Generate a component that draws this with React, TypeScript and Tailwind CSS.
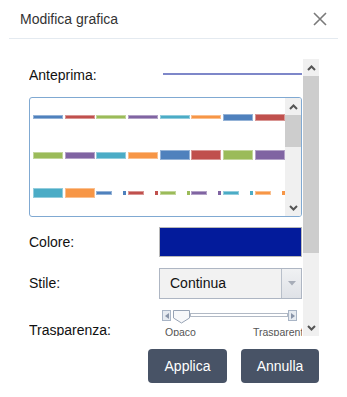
import React from "react";

type Seg = { c: string; h: string; dash?: boolean };

const BLUE = "bg-[#4f81bd]";
const RED = "bg-[#c0504d]";
const GREEN = "bg-[#9bbb59]";
const PURPLE = "bg-[#8064a2]";
const TEAL = "bg-[#4bacc6]";
const ORANGE = "bg-[#f79646]";

const rows: Seg[][] = [
  [
    { c: BLUE, h: "h-[4px]" },
    { c: RED, h: "h-[4px]" },
    { c: GREEN, h: "h-[4px]" },
    { c: PURPLE, h: "h-[4px]" },
    { c: TEAL, h: "h-[4px]" },
    { c: ORANGE, h: "h-[4px]" },
    { c: BLUE, h: "h-[7px]" },
    { c: RED, h: "h-[7px]" },
  ],
  [
    { c: GREEN, h: "h-[7px]" },
    { c: PURPLE, h: "h-[7px]" },
    { c: TEAL, h: "h-[7px]" },
    { c: ORANGE, h: "h-[7px]" },
    { c: BLUE, h: "h-[10px]" },
    { c: RED, h: "h-[10px]" },
    { c: GREEN, h: "h-[10px]" },
    { c: PURPLE, h: "h-[10px]" },
  ],
  [
    { c: TEAL, h: "h-[10px]" },
    { c: ORANGE, h: "h-[10px]" },
    { c: BLUE, h: "h-[4px]", dash: true },
    { c: RED, h: "h-[4px]", dash: true },
    { c: GREEN, h: "h-[4px]", dash: true },
    { c: PURPLE, h: "h-[4px]", dash: true },
    { c: TEAL, h: "h-[4px]", dash: true },
    { c: ORANGE, h: "h-[4px]", dash: true },
  ],
];

function Chevron({ up }: { up?: boolean }) {
  return (
    <svg width="9" height="6" viewBox="0 0 9 6">
      <path
        d={up ? "M1 5 L4.5 1.5 L8 5" : "M1 1 L4.5 4.5 L8 1"}
        fill="none"
        stroke="#555"
        strokeWidth="2"
      />
    </svg>
  );
}

function Segment({ s }: { s: Seg }) {
  if (s.dash) {
    return (
      <div className="flex w-[30px] shrink-0 justify-between">
        <div className={`${s.c} ${s.h} w-[16px] ring-1 ring-inset ring-white/40`} />
        <div className={`${s.c} ${s.h} w-[3px]`} />
      </div>
    );
  }
  return <div className={`${s.c} ${s.h} w-[30px] shrink-0 ring-1 ring-inset ring-white/40`} />;
}

export default function App() {
  return (
    <div className="relative h-[397px] w-[347px] overflow-hidden bg-white font-['Liberation_Sans',Arial,sans-serif] text-[14px] text-[#111]">
      {/* header */}
      <div className="flex h-[38px] items-center justify-between pl-[20px] pr-[20px]">
        <span className="text-[14px] text-[#333]">Modifica grafica</span>
        <svg width="14" height="14" viewBox="0 0 14 14" className="mt-[-1px]">
          <path d="M1 1 L13 13 M13 1 L1 13" stroke="#7a7a7a" strokeWidth="1.6" />
        </svg>
      </div>
      <div className="mx-[9px] h-px bg-[#e4eaf0]" />

      {/* body */}
      <div className="ml-[29px] mt-[20px] flex">
        <div className="h-[277px] w-[273px] overflow-hidden">
          <div className="flex h-[32px] items-center">
            <span className="w-[134px] shrink-0">Anteprima:</span>
            <div className="mt-[-2px] h-[2px] flex-1 bg-[#7e87c9]" />
          </div>

          <div className="mt-[6px] flex h-[120px] overflow-hidden rounded-[3px] border border-[#80a9d2]">
            <div className="flex-1 overflow-hidden pl-[3px]">
              {rows.map((r, i) => (
                <div key={i} className="flex h-[38px] items-center gap-[1.7px]">
                  {r.map((s, j) => (
                    <Segment key={j} s={s} />
                  ))}
                </div>
              ))}
            </div>
            <div className="flex w-[16px] shrink-0 flex-col bg-[#f0f0f0]">
              <div className="flex h-[17px] items-center justify-center">
                <Chevron up />
              </div>
              <div className="h-[32px] bg-[#cdcdcd]" />
              <div className="flex-1" />
              <div className="flex h-[17px] items-center justify-center">
                <Chevron />
              </div>
            </div>
          </div>

          <div className="mt-[10px] flex items-center">
            <span className="w-[130px] shrink-0">Colore:</span>
            <div className="h-[30px] flex-1 border border-[#b8b8b8] bg-[#031b9b]" />
          </div>

          <div className="mt-[11px] flex items-center">
            <span className="w-[130px] shrink-0">Stile:</span>
            <div className="flex h-[31px] flex-1 border border-[#aeb6c3] bg-[#f2f2f2]">
              <span className="flex flex-1 items-center pl-[10px]">Continua</span>
              <div className="flex w-[20px] items-center justify-center border-l border-[#b8bfca] bg-gradient-to-b from-[#f0f1f3] to-[#dfe2e7]">
                <svg width="8" height="5" viewBox="0 0 8 5">
                  <path d="M0 0 L8 0 L4 4.5 Z" fill="#a7adb8" />
                </svg>
              </div>
            </div>
          </div>

          <div className="mt-[11px] flex">
            <span className="w-[130px] shrink-0 self-end leading-[16px]">Trasparenza:</span>
            <div className="flex-1 overflow-hidden">
              <div className="flex h-[14px] items-start pl-[3px]">
                <div className="flex h-[11px] w-[9px] items-center justify-center border border-[#a9b5c6] bg-[#e6ebf1]">
                  <svg width="4" height="6" viewBox="0 0 4 6">
                    <path d="M4 0 L0 3 L4 6 Z" fill="#8894a8" />
                  </svg>
                </div>
                <svg width="17" height="14" viewBox="0 0 17 14" className="ml-[2px] shrink-0">
                  <path d="M0.5 0.5 H16.5 V8 L8.5 13 L0.5 8 Z" fill="#f7f8fa" stroke="#97a3b5" strokeWidth="1" />
                </svg>
                <div className="mt-[3px] h-[4px] flex-1 border border-[#b1b9c5] bg-white" />
                <div className="mr-[5px] flex h-[11px] w-[9px] items-center justify-center border border-[#a9b5c6] bg-[#e6ebf1]">
                  <svg width="4" height="6" viewBox="0 0 4 6">
                    <path d="M0 0 L4 3 L0 6 Z" fill="#8894a8" />
                  </svg>
                </div>
              </div>
              <div className="mt-[2px] flex whitespace-nowrap text-[10.5px] leading-[12px] text-[#555]">
                <span className="ml-[6px]">Opaco</span>
                <span className="ml-[57px]">Trasparente</span>
              </div>
            </div>
          </div>
        </div>

        <div className="ml-[1px] flex h-[277px] w-[16px] flex-col bg-[#f0f0f0]">
          <div className="flex h-[17px] items-center justify-center">
            <Chevron up />
          </div>
          <div className="h-[177px] bg-[#cdcdcd]" />
          <div className="flex-1" />
          <div className="flex h-[17px] items-center justify-center">
            <Chevron />
          </div>
        </div>
      </div>

      {/* footer */}
      <div className="mt-[13px] flex justify-end gap-[14px] pr-[28px]">
        <button className="h-[34px] w-[79px] rounded-[4px] bg-[#485366] text-[14px] text-white">
          Applica
        </button>
        <button className="h-[34px] w-[78px] rounded-[4px] bg-[#485366] text-[14px] text-white">
          Annulla
        </button>
      </div>
    </div>
  );
}
